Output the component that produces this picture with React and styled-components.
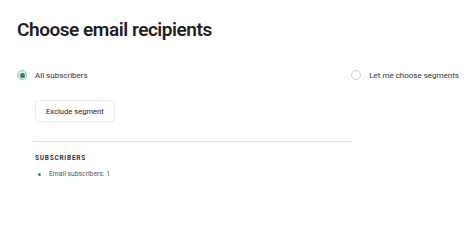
import React from 'react'
import styled, { createGlobalStyle } from 'styled-components'

const Global = createGlobalStyle`
  body {
    margin: 0;
    background: #fff;
    font-family: Roboto, "Liberation Sans", sans-serif;
    color: #222;
  }
`

const Page = styled.div`
  padding: 16px 15px 0 17px;
`

const Title = styled.h1`
  margin: 0;
  font-size: 19px;
  line-height: 28px;
  font-weight: 600;
  letter-spacing: -0.45px;
  color: #1f1f1f;
`

const RadioRow = styled.div`
  display: flex;
  justify-content: space-between;
  align-items: center;
  margin-top: 26px;
`

const Option = styled.label`
  display: flex;
  align-items: center;
  gap: 8px;
  font-size: 8px;
  color: #333;
`

const Radio = styled.span`
  width: 10px;
  height: 10px;
  border-radius: 50%;
  box-sizing: border-box;
  border: 1px solid ${p => (p.checked ? '#8fcbb2' : '#cfcfcf')};
  background: ${p => (p.checked ? '#d6efe4' : '#fff')};
  display: flex;
  align-items: center;
  justify-content: center;

  &::after {
    content: '';
    width: 5px;
    height: 5px;
    border-radius: 50%;
    background: ${p => (p.checked ? '#2b8660' : 'transparent')};
  }
`

const Indent = styled.div`
  padding-left: 18px;
`

const Button = styled.button`
  margin-top: 20px;
  height: 22px;
  padding: 0 10px;
  border: 1px solid #ececec;
  border-radius: 4px;
  background: #fff;
  font-family: inherit;
  font-size: 7.6px;
  color: #222;
  box-shadow: 0 1px 2px rgba(0, 0, 0, 0.04);
`

const Divider = styled.hr`
  margin: 19px 0 0 -2px;
  width: 319px;
  border: 0;
  border-top: 1px solid #dedede;
`

const Heading = styled.div`
  margin-top: 11px;
  font-size: 6.5px;
  font-weight: 700;
  letter-spacing: 0.75px;
  color: #333;
  line-height: 10px;
`

const List = styled.ul`
  list-style: none;
  margin: 6px 0 0;
  padding: 0 0 0 3px;
`

const Item = styled.li`
  display: flex;
  align-items: center;
  gap: 8px;
  font-size: 6.8px;
  line-height: 10px;
  color: #555;

  &::before {
    content: '';
    width: 3px;
    height: 3px;
    border-radius: 50%;
    background: #2f8a63;
  }
`

export default function App() {
  return (
    <>
      <Global />
      <Page>
        <Title>Choose email recipients</Title>
        <RadioRow>
          <Option>
            <Radio checked />
            All subscribers
          </Option>
          <Option>
            <Radio />
            Let me choose segments
          </Option>
        </RadioRow>
        <Indent>
          <Button>Exclude segment</Button>
          <Divider />
          <Heading>SUBSCRIBERS</Heading>
          <List>
            <Item>Email subscribers: 1</Item>
          </List>
        </Indent>
      </Page>
    </>
  )
}
